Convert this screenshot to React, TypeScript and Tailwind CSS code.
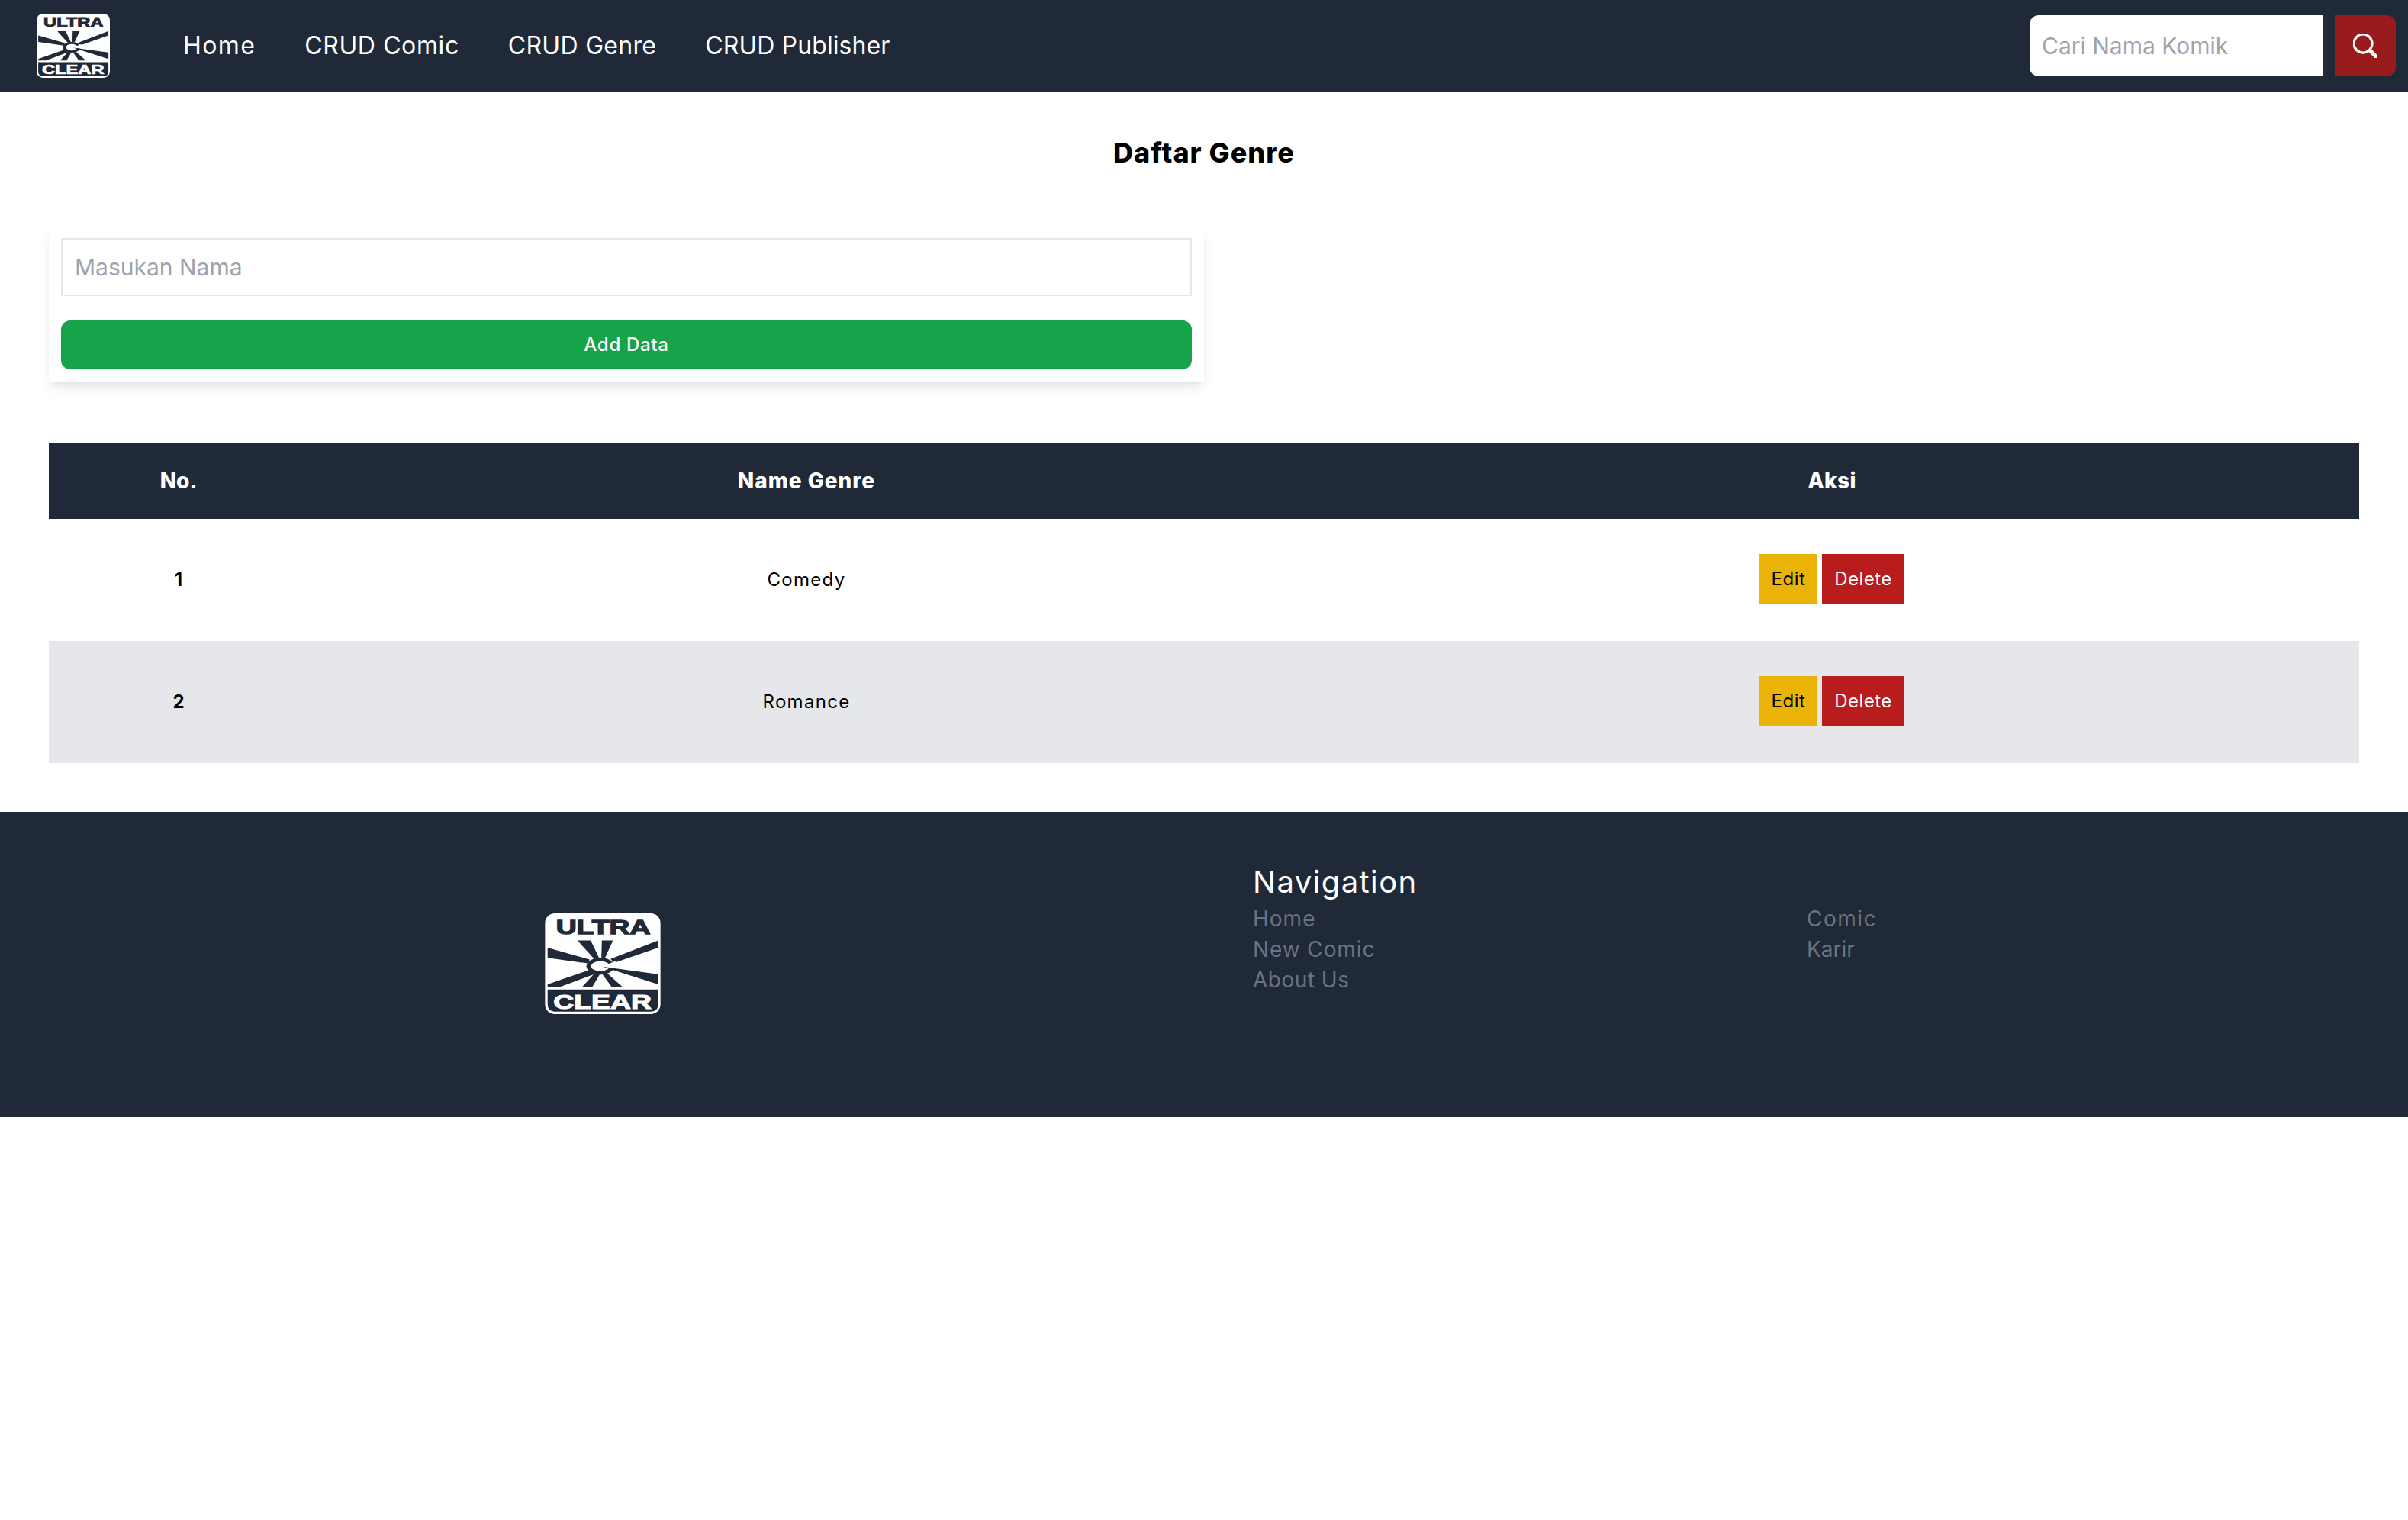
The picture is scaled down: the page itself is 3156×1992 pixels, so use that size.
import React from 'react';
import { BsSearch } from 'react-icons/bs';

const font = "font-['Inter','Noto_Sans',sans-serif]";

const Logo = ({ className }: { className: string }) => (
  <svg viewBox="72 50 455 397" className={className}>
    <rect x="72" y="50" width="455" height="397" rx="38" fill="#fff" />
    <text x="115" y="130" textLength="372" lengthAdjust="spacingAndGlyphs" fontFamily="'Liberation Sans', sans-serif" fontWeight="700" fontSize="80" fill="#1f2937" stroke="#1f2937" strokeWidth="4">ULTRA</text>
    <g fill="#1f2937">
      <polygon points="200,157 252,157 285,226 268,232" />
      <polygon points="296,157 340,157 308,226 294,226" />
      <polygon points="82,185 82,225 240,247 248,232" />
      <polygon points="518,157 518,185 345,245 330,230" />
      <polygon points="82,330 82,340 130,340 270,288 240,275" />
      <polygon points="218,340 258,340 288,290 268,285" />
      <polygon points="335,340 378,340 316,285 298,290" />
      <ellipse cx="290" cy="258" rx="55" ry="33" />
    </g>
    <ellipse cx="290" cy="258" rx="36" ry="20" fill="#fff" />
    <polygon points="300,258 350,238 350,268" fill="#fff" />
    <polygon points="518,290 518,330 298,260" fill="#1f2937" />
    <path d="M82 350H518V408Q518 437 489 437H111Q82 437 82 408Z" fill="#1f2937" />
    <text x="105" y="425" textLength="387" lengthAdjust="spacingAndGlyphs" fontFamily="'Liberation Sans', sans-serif" fontWeight="700" fontSize="76" fill="#fff" stroke="#fff" strokeWidth="3">CLEAR</text>
  </svg>
);

const genres = [
  { id: 1, name: 'Comedy' },
  { id: 2, name: 'Romance' },
];

export default function App() {
  return (
    <div className={`${font} min-h-[1992px] bg-white text-black`}>
      {/* Navbar */}
      <nav className="flex h-[120px] items-center justify-between bg-[#1f2937] pl-[48px] pr-[16px]">
        <div className="flex items-center">
          <Logo className="h-[84px] w-[96px]" />
          <ul className="ml-[96px] flex gap-[64px] text-[32px] text-white">
            <li className="tracking-[1.4px]">Home</li>
            <li className="tracking-[0.6px]">CRUD Comic</li>
            <li className="tracking-[0.3px]">CRUD Genre</li>
            <li className="tracking-[0.1px]">CRUD Publisher</li>
          </ul>
        </div>
        <div className="flex gap-[16px]">
          <input
            placeholder="Cari Nama Komik"
            className="h-[80px] w-[384px] rounded-l-[12px] bg-white px-[16px] text-[30px] outline-none placeholder:text-[#9ca3af]"
          />
          <button className="flex h-[80px] w-[80px] items-center justify-center rounded-r-[12px] bg-[#991b1b]">
            <BsSearch className="h-[32px] w-[32px] text-white" stroke="currentColor" strokeWidth={0.6} />
          </button>
        </div>
      </nav>

      {/* Title */}
      <h1 className="pt-[52px] pb-[68px] text-center text-[36px] leading-[56px] font-extrabold tracking-[1px]">Daftar Genre</h1>

      {/* Form */}
      <div className="ml-[64px] flex w-[1514px] flex-col gap-[32px] p-[16px] shadow-lg">
        <input
          placeholder="Masukan Nama"
          className="h-[76px] w-full border-2 border-[#e5e7eb] px-[16px] text-[30px] outline-none placeholder:text-[#9ca3af]"
        />
        <button className="h-[64px] w-full rounded-[12px] bg-[#16a34a] text-[24px] font-medium tracking-[0.7px] text-white">Add Data</button>
      </div>

      {/* Table */}
      <div className="mt-[80px] px-[64px]">
        <table className="w-full table-fixed border-collapse">
          <thead className="bg-[#1f2937] text-[28px] text-white">
            <tr className="h-[100px]">
              <th className="w-[340px] font-extrabold">No.</th>
              <th className="w-[1306px] font-extrabold tracking-[1px]">Name Genre</th>
              <th className="font-extrabold tracking-[0.4px]">Aksi</th>
            </tr>
          </thead>
          <tbody className="text-[24px]">
            {genres.map((genre) => (
              <tr key={genre.id} className="h-[160px] even:bg-[#e5e7eb]">
                <td className="text-center font-bold">{genre.id}</td>
                <td className="text-center tracking-[1.3px]">{genre.name}</td>
                <td>
                  <div className="-mt-[2px] flex justify-center gap-[6px]">
                    <button className="h-[66px] w-[76px] bg-[#eab308] tracking-[0.5px]">Edit</button>
                    <button className="h-[66px] w-[108px] bg-[#b91c1c] tracking-[0.5px] text-white">Delete</button>
                  </div>
                </td>
              </tr>
            ))}
          </tbody>
        </table>
      </div>

      {/* Footer */}
      <footer className="mt-[64px] flex h-[400px] bg-[#1f2937]">
        <div className="flex w-[1580px] items-center justify-center pb-[2px]">
          <Logo className="h-[132px] w-[152px]" />
        </div>
        <div className="ml-[62px] w-[726px] pt-[64px]">
          <h2 className="text-[40px] leading-[56px] tracking-[1.4px] text-white">Navigation</h2>
          <ul className="text-[28px] leading-[40px] text-[#6b7280]">
            <li className="tracking-[1px]">Home</li>
            <li className="tracking-[0.9px]">New Comic</li>
            <li className="tracking-[0.5px]">About Us</li>
          </ul>
        </div>
        <div className="pt-[120px]">
          <ul className="text-[28px] leading-[40px] text-[#6b7280]">
            <li className="tracking-[1.5px]">Comic</li>
            <li>Karir</li>
          </ul>
        </div>
      </footer>
    </div>
  );
}
